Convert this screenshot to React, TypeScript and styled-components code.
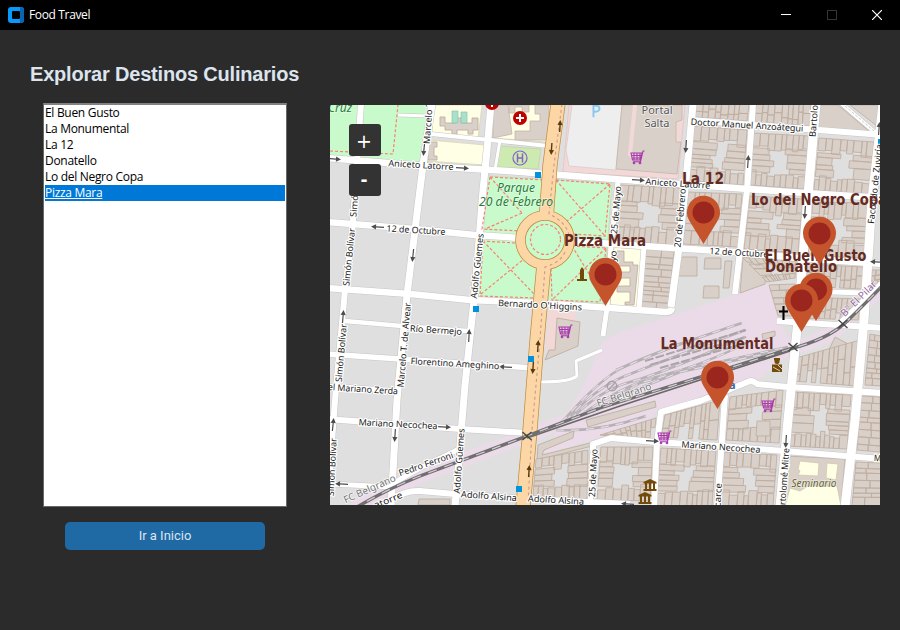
import React from "react";
import styled, { createGlobalStyle } from "styled-components";

const GlobalStyle = createGlobalStyle`
  * { box-sizing: border-box; }
  html, body { margin: 0; padding: 0; background: #2b2b2b; overflow: hidden; }
`;

const Window = styled.div`
  width: 900px;
  height: 630px;
  display: flex;
  flex-direction: column;
  background: #2b2b2b;
  font-family: "Noto Sans", sans-serif;
`;
const TitleBar = styled.header`
  height: 30px;
  flex: none;
  display: flex;
  align-items: center;
  background: #000;
  color: #fff;
  padding-left: 8px;
`;
const AppName = styled.span`
  flex: 1;
  padding-left: 5px;
  font: 12px/28px "Open Sans", sans-serif;
  letter-spacing: -0.35px;
`;
const WindowButton = styled.button<{ $dim?: boolean }>`
  width: 45.5px;
  height: 28px;
  padding: 0;
  border: 0;
  background: none;
  display: grid;
  place-items: center;
  color: ${(p) => (p.$dim ? "#343434" : "#fff")};
`;
const Body = styled.main`
  display: grid;
  grid-template-columns: 300px 550px;
  flex: 1;
`;
const Sidebar = styled.section`
  display: flex;
  flex-direction: column;
  align-items: flex-start;
`;
const Heading = styled.h1`
  margin: 30px 0 0 30px;
  height: 43px;
  white-space: nowrap;
  color: #dce4ee;
  font: bold 20px/28px "Liberation Sans", sans-serif;
  letter-spacing: -0.19px;
`;
const ListBox = styled.ul`
  margin: 0 0 0 43px;
  padding: 0 0 0 1px;
  width: 244px;
  height: 404px;
  list-style: none;
  background: #fff;
  border: 1px solid #696969;
  border-top: 2px solid #828282;
`;
const ListItem = styled.li<{ $selected?: boolean }>`
  height: 16px;
  width: 240px;
  font: 12px/16px "Open Sans", sans-serif;
  letter-spacing: -0.3px;
  color: ${(p) => (p.$selected ? "#fff" : "#000")};
  background: ${(p) => (p.$selected ? "#0078d7" : "transparent")};
  text-decoration: ${(p) => (p.$selected ? "underline" : "none")};
`;
const HomeButton = styled.button`
  margin: 15px 0 0 65px;
  width: 200px;
  height: 28px;
  border: 0;
  padding: 0;
  border-radius: 5px;
  background: #1f6aa5;
  color: #dce4ee;
  font: 13px/28px Roboto, sans-serif;
`;
const MapPane = styled.section`
  position: relative;
  width: 550px;
  height: 400px;
  margin: 75px 0 0 30px;
  overflow: hidden;
`;
const MapCanvas = styled.svg`
  display: block;
`;
const ZoomControls = styled.div`
  position: absolute;
  left: 19px;
  top: 19px;
  display: flex;
  flex-direction: column;
  gap: 8px;
`;
const ZoomButton = styled.button<{ $heavy?: boolean }>`
  width: 32px;
  height: 32px;
  border: 0;
  border-radius: 3px;
  padding: 0 2px 0 0;
  background: #333;
  color: #fff;
  font: ${(p) => (p.$heavy ? "bold 17px/32px" : "19px/34px")} "DejaVu Sans", sans-serif;
`;

type Pt = [number, number];

/* ---- lots inside city blocks ---- */
const rng = (seed: number) => () => {
  seed = (seed * 16807) % 2147483647;
  return seed / 2147483647;
};
const quad = (q: number[], u: number, v: number): Pt => {
  const f = (i: number) =>
    q[i] * (1 - u) * (1 - v) + q[2 + i] * u * (1 - v) + q[4 + i] * u * v + q[6 + i] * (1 - u) * v;
  return [f(0), f(1)];
};
const lotPaths = (q: number[], seed: number) => {
  const r = rng(seed * 7919 + 13);
  for (let i = 0; i < 4; i++) r();
  const w = Math.hypot(q[2] - q[0], q[3] - q[1]);
  const h = Math.hypot(q[6] - q[0], q[7] - q[1]);
  let d = "";
  const cell = (a: number, b: number, c: number, e: number) => {
    const ps = [quad(q, a, b), quad(q, c, b), quad(q, c, e), quad(q, a, e)];
    d += "M" + ps.map((p) => p[0].toFixed(1) + " " + p[1].toFixed(1)).join("L") + "Z";
  };
  const run = (len: number, min: number, max: number, put: (s: number, e: number) => void) => {
    let t = 0;
    while (t < 1) {
      let n = t + (min + r() * (max - min)) / len;
      if (1 - n < min / len) n = 1;
      put(t, n);
      t = n;
    }
  };
  if (h < 30 || w < 30) {
    if (w >= h) {
      run(w, 4, 8, (s, e) => { const m = 0.35 + r() * 0.4; cell(s, 0, e, m); if (r() > 0.15) cell(s, m, e, 1); });
    } else run(h, 4, 8, (s, e) => { const m = 0.35 + r() * 0.35; cell(0, s, m, e); cell(m, s, 1, e); });
    return d;
  }
  run(w, 4, 8.5, (s, e) => cell(s, 0, e, 0.2 + r() * 0.14));
  run(w, 4, 8.5, (s, e) => cell(s, 0.69 + r() * 0.12, e, 1));
  run(h * 0.46, 4, 8, (s, e) => cell(0, 0.28 + s * 0.46, 0.25 + r() * 0.22, 0.28 + e * 0.46));
  run(h * 0.46, 4, 8, (s, e) => cell(0.56 + r() * 0.2, 0.28 + s * 0.46, 1, 0.28 + e * 0.46));
  return d;
};
const blocks: number[][] = [
  [621, 185, 682, 188, 677, 245, 614, 241],
  [646, 249, 674, 251, 668, 310, 641, 308],
  [696, 104, 749, 104, 747, 121, 695, 117],
  [694, 126, 747, 130, 743, 185, 689, 181],
  [756, 104, 811, 104, 810, 126, 754, 122],
  [753, 133, 809, 136, 804, 189, 749, 185],
  [819, 138, 874, 142, 869, 194, 814, 190],
  [688, 192, 742, 194, 738, 247, 683, 244],
  [750, 196, 803, 199, 798, 253, 744, 249],
  [813, 202, 868, 203, 864, 258, 808, 255],
  [805, 264, 864, 267, 862, 289, 803, 286],
  [802, 297, 861, 299, 858, 320, 800, 318],
  [796, 358, 860, 340, 857, 386, 793, 381],
  [791, 392, 851, 395, 847, 449, 787, 446],
  [861, 396, 880, 397, 880, 452, 857, 450],
  [730, 397, 783, 390, 779, 443, 726, 440],
  [665, 415, 720, 400, 717, 440, 661, 437],
  [601, 447, 653, 447, 650, 501, 597, 500],
  [661, 448, 716, 451, 712, 506, 656, 506],
  [724, 452, 777, 455, 773, 506, 720, 506],
  [856, 462, 881, 463, 881, 506, 852, 506],
  [536, 459, 588, 450, 587, 499, 533, 496],
  [872, 270, 881, 270, 881, 290, 870, 295],
  [870, 334, 881, 336, 881, 386, 865, 385],
  [600, 435, 656, 418, 654, 438, 607, 436],
  [769, 285, 795, 284, 792, 316, 778, 316],
  [742, 257, 796, 261, 795, 278, 767, 282],
];

/* ---- streets: [width, path] ---- */
const streets: [number, string][] = [
  [6.5, "M328 158L425 166L508 171L640 181L748 189L805 193L882 198"],
  [6.5, "M328 222L415 229L475 235L520 238M570 241L643 246L735 252L798 258L882 264"],
  [6.5, "M328 288L410 294L470 300L540 303L666 312Q671 312 672 308"],
  [4.5, "M345 321L402 326L468 331"],
  [5.5, "M328 354L400 359L532 368"],
  [5, "M328 386L400 391"],
  [6, "M328 419L460 429L527 433"],
  [6, "M593 450V444L611 438L655 442L721 446L882 459"],
  [5, "M328 484L392 487"],
  [6, "M392 499Q406 490 420 491L455 494L525 499L630 504"],
  [5, "M392 484L420 468L457 450"],
  [6, "M361 104L352 235L345 290L335 400L329 482"],
  [7, "M432 104L423 165L415 230L407 295L397 400L391 507"],
  [7, "M491 104L487 150L483 190L475 290L465 385L455 507"],
  [5, "M618 181L611 245L607 308L603 336"],
  [5, "M593 448L590 507"],
  [7, "M693 104L686 180L679 248L671 307"],
  [5, "M644 246L639 309"],
  [6, "M753 104L747 190L735 294"],
  [9, "M816 104L808 195L798 320L788 420L780 507"],
  [9, "M883 104L872 200L864 320L855 420L845 507"],
  [6, "M725 395L722 440L717 507"],
  [6, "M654 507L657 442L661 412L700 401L728 390L750 381Q754 381 757 384L788 387L882 393"],
  [6, "M690 120L882 135"],
  [5, "M803 291L863 293"],
  [6, "M777 321L882 328"],
  [7, "M838 326L882 284"],
  [3, "M540 382Q570 382 577 376L576 361L602 350"],
  [3, "M398 115L428 116"],
  [4, "M431 134L490 140L548 146"],
  [3, "M500 140L495 170"],
  [4, "M842 104L877 134"],
];

const avenue = "M558 104L550 165L546.5 214M544 264L537 340L530 430L523 507";
const rail = "M352 510Q385 490 420 476L527 436L600 408L700 377L790 349Q828 339 845 323T882 286";

const yard = [
  "M561 423Q597 382 620 369T742 323",
  "M565 422Q595 388 625 376T745 330",
  "M570 420Q600 390 630 382T745 337",
  "M580 416Q620 386 660 376T745 344",
  "M592 412L640 383L700 366L788 347",
  "M610 400L680 372L788 349",
  "M556 430Q600 432 646 416",
  "M616 370L682 343",
];

/* ---- street names: text, x, y (centre), angle, width ---- */
const names: [string, number, number, number, number][] = [
  ["Aniceto Latorre", 421, 165, 3.5, 65],
  ["Aniceto Latorre", 678, 183.5, 4, 65],
  ["12 de Octubre", 416, 230, 3.5, 59],
  ["12 de Octubre", 739, 252.5, 3.5, 59],
  ["Bernardo O'Higgins", 540, 305, 3, 84],
  ["Río Bermejo", 436, 330, 3.5, 52],
  ["Florentino Ameghino", 455, 363.5, 3.5, 89],
  ["el Mariano Zerda", 363, 389, 3.5, 70],
  ["Mariano Necochea", 398, 424, 3, 79],
  ["Mariano Necochea", 721, 447, 4, 79],
  ["Adolfo Alsina", 489, 496, 4, 56],
  ["Adolfo Alsina", 556, 500, 3.5, 56],
  ["Pedro Ferroni", 426, 464, -19, 57],
  ["atorre", 388, 500, -22, 30],
  ["Doctor Manuel Anzoátegui", 747, 125, 3.5, 113],
  ["Simón Bolívar", 349, 257, -84, 58],
  ["Simó", 354, 206, -85, 22],
  ["Simón Bolívar", 341, 353, -85, 58],
  ["Simón Bolívar", 332, 467, -87, 58],
  ["Marcelo T. de Alvear", 404, 345, -85, 85],
  ["Marcelo T", 428, 123, -86, 42],
  ["Adolfo Güemes", 477, 266, -84, 65],
  ["Adolfo Güemes", 459, 461, -86, 65],
  ["25 de Mayo", 616, 210, -85, 48],
  ["yo", 613, 256, -85, 11],
  ["25 de Mayo", 593, 473, -87, 48],
  ["20 de Febrero", 680, 218, -85, 59],
  ["Bartolomé", 814, 114, -86, 46],
  ["artolomé Mitre", 784, 479, -86, 62],
  ["Facundo de Zuviría", 875, 184, -84, 80],
  ["carce", 718, 495, -87, 24],
  ["Ma", 880, 458, 3, 12],
];

const arrows: [number, number, number][] = [
  [334, 159, 4], [462, 168, 4], [424, 149, 96], [378, 227, 184], [413, 255, 96],
  [343, 317, -85], [469, 336, -87], [506, 367, 184], [444, 427, 3], [333, 425, -84],
  [395, 435, 94], [342, 484, 183], [638, 180, 4], [686, 146, 94], [748, 162, -86],
  [805, 212, 94], [652, 441, 3], [786, 441, 94], [879, 129, -86], [877, 262, 184], [628, 504, 184],
];

const pins: { name: string; x: number; y: number; w: number }[] = [
  { name: "El Buen Gusto", x: 816, y: 321, w: 102 },
  { name: "La Monumental", x: 717.5, y: 409, w: 113 },
  { name: "La 12", x: 703.5, y: 244, w: 42 },
  { name: "Donatello", x: 801.5, y: 332, w: 72 },
  { name: "Lo del Negro Copa", x: 819.5, y: 265, w: 136 },
  { name: "Pizza Mara", x: 605.5, y: 306, w: 82 },
];

const Cart = ({ x, y }: { x: number; y: number }) => (
  <g transform={`translate(${x} ${y})`} fill="none" stroke="#aa39ad" strokeWidth="1.1">
    <path d="M-6 -4H5L3.5 3H-4.5ZM-5.5 -1.5H4.500M-5 1H4M-3 -4V3M0 -4V3M3 -4V3M7.500 -6H6L3.500 4.700H-4" />
    <circle cx="-3" cy="6" r=".8" /><circle cx="3" cy="6" r=".8" />
  </g>
);
const Museum = ({ x, y }: { x: number; y: number }) => (
  <g transform={`translate(${x} ${y})`} fill="#734a08">
    <path d="M-6.5 -3L0 -6L6.5 -3V-1.5H-6.5ZM-5 -1.5H-3V4H-5ZM-1 -1.5H1V4H-1ZM3 -1.5H5V4H3ZM-6.5 4H6.5V6H-6.5Z" />
  </g>
);
const RedCross = ({ x, y }: { x: number; y: number }) => (
  <g transform={`translate(${x} ${y})`}>
    <circle r="7" fill="#bf0000" />
    <path d="M-4 0H4M0 -4V4" stroke="#fff" strokeWidth="2" />
  </g>
);
const Crossing = ({ x, y }: { x: number; y: number }) => (
  <path d={`M${x - 4.5} ${y - 4}l9 8m-9 0l9 -8`} stroke="#444" strokeWidth="1.3" />
);

const CityMap = () => (
  <MapCanvas width="550" height="400" viewBox="330 105 550 400" fontFamily="Noto Sans, sans-serif">
    <rect x="330" y="105" width="550" height="400" fill="#dfdfdf" />

    {/* green areas */}
    <path d="M330 105H427L422 162L330 155Z" fill="#c8facc" />
    <path d="M487 176L612 183L603 304L478 297Z" fill="#c8facc" stroke="#b5dcb5" strokeWidth=".6" />
    <path d="M498 146L541 149L538 169L497 167Z" fill="#cdebb0" stroke="#b8cfa0" strokeWidth=".6" />

    {/* hospital and school grounds */}
    <path d="M433 105H482L478 138L432 134Z M429 140L485 145V165L427 161Z" fill="#ffffe5" stroke="#d9d2ad" strokeWidth=".7" />
    <path d="M493 105H551L547 142L493 138Z" fill="#ffffe5" stroke="#d9d2ad" strokeWidth=".7" />
    <path d="M493 105H508L512 134L493 138Z M509 105H529V112H522V107H515V113H509ZM535 105H549V140H515V131H530V121H540V114H535Z" fill="#d9d0c9" stroke="#c4b5a8" strokeWidth=".8" />
    <path d="M440 117h5v6h11v-5h5v5h11v-5h6v12h-5v4h-5v-4h-11v4h-5v-4h-7v-4h-5Z M428 142h9v5h-3v9h3v4h-9Z" fill="#d9d0c9" stroke="#c0aea0" strokeWidth=".9" />
    <path d="M452 111h6v12h-6ZM461 112h6v11h-6Z" fill="#aae0cb" stroke="#82c8ad" strokeWidth=".7" />

    {/* shopping centre */}
    <path d="M569 105H685L678 179L563 172Z" fill="#f2d9d8" stroke="#e5c3c3" strokeWidth=".8" />
    <path d="M572 105H622L616 170L569 166L566 150Z" fill="#eee" stroke="#dacaca" strokeWidth=".8" />
    <path d="M622 105H682V120L676 122V142H681L677 174L616 169Z" fill="#d9d0c9" stroke="#c4b5a8" strokeWidth=".8" />
    <path d="M635 105L630 154Q632 158 637 156" fill="none" stroke="#f2d9d8" strokeWidth="4" />
    <path d="M549 306L576 309L572 350L545 350Z" fill="#f2d9d8" />
    <path d="M557 318L580 322L578 346L545 360L549 350H555Z" fill="#d9d0c9" stroke="#bba99a" strokeWidth=".8" />

    {/* railway land */}
    <path d="M560 424Q590 380 597 350Q605 335 640 326L769 284L784 331L797 348L758 380L720 390L655 412L650 422L545 454Z" fill="#ebdbe8" />
    <path d={rail} fill="none" stroke="#ebdbe8" strokeWidth="14" />

    {/* buildings */}
    <path d="M614 247L643 249L637 308L610 306Z" fill="#ffffe5" stroke="#d7c7a5" strokeWidth=".7" />
    <path d="M617 251H624V262H633V265H638L634 305H625V302H630V292H617V286H630V278H620V272H630V266H617Z" fill="#d9d0c9" stroke="#bba99a" strokeWidth=".8" />
    <path d="M679 257H697V276H678ZM705 258H721V269H704ZM725 261H732L729 288H723ZM704 286H719V298H703ZM762 334L775 331V336L763 340Z M835 337L854 347L848 364L826 356ZM586 420L655 401L656 407L588 427ZM538 445L574 431L573 438L544 450L542 455L610 438L596 445L537 460ZM419 499H450V505H418Z" fill="#d9d0c9" stroke="#bba99a" strokeWidth=".8" />
    <path d="M743 257L767 259L765 284L740 293Z" fill="#d9d0c9" stroke="#bba99a" strokeWidth=".8" />
    <g fill="#d9d0c9" stroke="#bfae9f" strokeWidth=".85">
      {blocks.map((b, i) => <path key={i} d={lotPaths(b, i + 3)} />)}
      <path d="M820 105H838L870 132L818 128Z M850 105H879L877 126Z" />
      <path d="M786 456L845 459L841 506H782Z" />
      <path d="M757 421H770V436H756Z" />
    </g>
    <path d="M800 461L819 463L818 476L798 475L800 471L798 469ZM827 463L838 464L836 480L826 478ZM787 461L791 464L788 474H785ZM790 488L800 491L808 486H837L841 506H785Z" fill="#ffffe5" stroke="#d3c7a9" strokeWidth=".8" />

    {/* streets */}
    <g fill="none" strokeLinejoin="round">
      {streets.map(([w, d], i) => <path key={i} d={d} stroke="#c8c5c4" strokeWidth={w + 1} />)}
      {streets.map(([w, d], i) => <path key={i} d={d} stroke="#fff" strokeWidth={w} />)}
      <path d="M845 106L874 131" stroke="#bbb" strokeWidth=".8" strokeDasharray="3 1.5" />
    </g>

    {/* park paths */}
    <g fill="none" stroke="#fa8072" strokeWidth="1.2" strokeDasharray="3 2">
      <path d="M330 151L393 154L398 105" />
      <path d="M490 177L544 180L540 211M490 177L482 229L520 231M490 177L522 213M522 213L485 229" />
      <path d="M556 180L610 184L605 236L573 234M556 180L553 211M556 180L605 236M610 184L565 223" />
      <path d="M483 241L480 296L536 298L539 266M483 241L535 295M481 294L530 254M515 243L482 241" />
      <path d="M572 246L606 248L600 302L552 300L551 266M572 246L605 300M606 248L553 299" />
      <circle cx="545.5" cy="239.5" r="15" />
    </g>

    {/* avenue and roundabout */}
    <g fill="none">
      <path d={avenue} stroke="#bd8b3d" strokeWidth="15" />
      <circle cx="545" cy="240" r="24.5" stroke="#bd8b3d" strokeWidth="10.5" />
      <path d={avenue} stroke="#fcd6a4" strokeWidth="13.6" />
      <circle cx="545" cy="240" r="24.5" stroke="#fcd6a4" strokeWidth="9" />
      <path d="M562 104L554 165L549 214Q566 222 569 235M565 252Q560 263 545 267L540 340L532 430L528 504" stroke="#c99a91" strokeWidth="1.1" strokeDasharray="3 3" />
    </g>

    {/* tracks */}
    <g fill="none">
      {yard.map((d, i) => (
        <g key={i}>
          <path d={d} stroke="#b6b1b5" strokeWidth="2.5" />
          <path d={d} stroke="#e6dce4" strokeWidth="1.2" strokeDasharray="8 7" />
        </g>
      ))}
      <path d="M645 361L746 330M650 365L746 337M660 368L746 343" stroke="#aaa5a9" strokeWidth="2" strokeDasharray="9 2" />
      <path d={rail} stroke="#6f6f70" strokeWidth="3.4" />
      <path d={rail} stroke="#d3cbd1" strokeWidth="1.2" strokeDasharray="9 8" />
      <path d="M527 438L620 406L700 380L790 351" stroke="#696869" strokeWidth="1.8" />
      <Crossing x={527} y={436} /><Crossing x={793} y={347} /><Crossing x={843} y={324} />
    </g>

    {arrows.map(([x, y, a], i) => (
      <path key={i} transform={`translate(${x} ${y}) rotate(${a})`} d="M-6 -.6H2V-2.6L7 0L2 2.6V.6H-6Z" fill="#4d4d4d" />
    ))}
    {([[560, 126, -87], [551.5, 149, 94], [538, 346, -86], [533, 368, 94], [529, 471, -86]] as number[][]).map(([x, y, a], i) => (
      <path key={i} transform={`translate(${x} ${y}) rotate(${a})`} d="M-6 -.7H1V-2.6L6 0L1 2.6V.7H-6Z" fill="#593a0b" />
    ))}
    <path d="M535 172h6v6h-6ZM473 306h6v6h-6ZM528 356h6v6h-6ZM516 486h6v6h-6ZM878 139h6v6h-6Z" fill="#0092da" />

    {/* street names */}
    <g fontSize="9" fill="#222" stroke="#fff" strokeWidth="2.2" strokeLinejoin="round" paintOrder="stroke" textAnchor="middle">
      {names.map(([t, x, y, a, w], i) => (
        <text key={i} transform={`translate(${x} ${y}) rotate(${a})`} y="3.2" textLength={w} lengthAdjust="spacingAndGlyphs">{t}</text>
      ))}
    </g>
    <g fontSize="10" fill="#777" stroke="#fff" strokeOpacity=".7" strokeWidth="1.6" paintOrder="stroke" textAnchor="middle">
      <text transform="translate(371 492) rotate(-24)" textLength="56">FC Belgrano</text>
      <text transform="translate(625 398) rotate(-18)" textLength="57">FC Belgrano</text>
      <text transform="translate(861 301) rotate(-45)" fill="#91659b" textLength="46">B° El Pilar</text>
    </g>
    <g fontSize="12" fontStyle="italic" fill="#267d3b" stroke="#fff" strokeOpacity=".5" strokeWidth="1.4" paintOrder="stroke" textAnchor="middle">
      <text x="516" y="192" textLength="38">Parque</text>
      <text x="516" y="206" textLength="74" lengthAdjust="spacingAndGlyphs">20 de Febrero</text>
      <text x="340" y="112">Cruz</text>
      <text x="814" y="487" fontSize="10" fill="#65652e" textLength="45">Seminario</text>
    </g>
    <g fontSize="11" fill="#555" stroke="#fff" strokeOpacity=".7" strokeWidth="1.4" paintOrder="stroke" textAnchor="middle">
      <text x="657" y="114" textLength="31">Portal</text>
      <text x="657" y="127" textLength="25">Salta</text>
    </g>
    <text x="591" y="117" fontSize="16" fill="#83c9ed" stroke="#83c9ed" strokeWidth=".3">P</text>

    {/* points of interest */}
    <RedCross x={492} y={103} /><RedCross x={520} y={118} />
    <g fill="none" stroke="#8461c4" strokeWidth="1.2">
      <circle cx="520" cy="158" r="7" />
      <path d="M517.5 153.5V162.5M522.5 153.5V162.5M517.5 158H522.5" strokeWidth="1.5" />
    </g>
    <Cart x={637} y={157} /><Cart x={565} y={331} /><Cart x={664} y={437} /><Cart x={768} y={405} />
    <Museum x={650} y={485} /><Museum x={645} y={498} />
    <g fill="#734a08">
      <path d="M577 281V279H580V270L582 267L584 270V279H587V281Z" />
      <circle cx="777" cy="361.5" r="2.5" />
      <path d="M774 358H780V360.5H774ZM772 364.5H782V372H772Z" />
    </g>
    <path d="M773 367L780 371M778 365L782 369" stroke="#d9d0c9" strokeWidth="1" />
    <path d="M783.5 306V320M779 311.5H788" stroke="#000" strokeWidth="2.1" />
    <circle cx="612" cy="386" r="4.7" fill="none" stroke="#a4a0a4" strokeWidth="1.4" />
    <path d="M609 389L615 383" stroke="#a4a0a4" strokeWidth="1.2" />
    <text x="729" y="389" fontSize="11" fontWeight="700" fill="#4266ab">a</text>

    {/* destinations */}
    <g fontFamily="DejaVu Sans Condensed, DejaVu Sans, sans-serif" fontStretch="condensed" fontWeight="700" fontSize="15.5" fill="#652a22" textAnchor="middle">
      {pins.map((p) => (
        <text key={p.name} x={p.x - 0.5} y={p.y - 60} textLength={p.w} lengthAdjust="spacingAndGlyphs">{p.name}</text>
      ))}
    </g>
    {pins.map((p) => (
      <g key={p.name} transform={`translate(${p.x} ${p.y})`}>
        <path d="M0 0L-14 -23A16.5 16.5 0 1 1 14 -23Z" fill="#c5542d" />
        <circle cy="-31.5" r="11" fill="#9b261e" />
      </g>
    ))}
  </MapCanvas>
);

const places = ["El Buen Gusto", "La Monumental", "La 12", "Donatello", "Lo del Negro Copa", "Pizza Mara"];

export default function App() {
  return (
    <>
      <GlobalStyle />
      <Window>
        <TitleBar>
          <svg width="16" height="16" viewBox="0 0 16 16">
            <path d="M3 0H13Q16 0 16 3V13Q16 16 13 16H3Q0 16 0 13V3Q0 0 3 0Z" fill="#0799fb" />
            <path d="M12 0H13Q16 0 16 3V13Q16 16 13 16H12Z" fill="#0865b4" />
            <rect x="4" y="4" width="8" height="8" rx="1" fill="#000" />
          </svg>
          <AppName>Food Travel</AppName>
          <WindowButton aria-label="Minimizar">
            <svg width="10" height="10"><path d="M0 4.5H10" stroke="currentColor" /></svg>
          </WindowButton>
          <WindowButton $dim aria-label="Maximizar">
            <svg width="10" height="10"><rect x=".5" y=".5" width="9" height="9" fill="none" stroke="currentColor" /></svg>
          </WindowButton>
          <WindowButton aria-label="Cerrar">
            <svg width="10" height="10"><path d="M0 0L10 10M10 0L0 10" stroke="currentColor" strokeWidth="1.2" /></svg>
          </WindowButton>
        </TitleBar>
        <Body>
          <Sidebar>
            <Heading>Explorar Destinos Culinarios</Heading>
            <ListBox>
              {places.map((p) => <ListItem key={p} $selected={p === "Pizza Mara"}>{p}</ListItem>)}
            </ListBox>
            <HomeButton>Ir a Inicio</HomeButton>
          </Sidebar>
          <MapPane>
            <CityMap />
            <ZoomControls>
              <ZoomButton>+</ZoomButton>
              <ZoomButton $heavy>-</ZoomButton>
            </ZoomControls>
          </MapPane>
        </Body>
      </Window>
    </>
  );
}
